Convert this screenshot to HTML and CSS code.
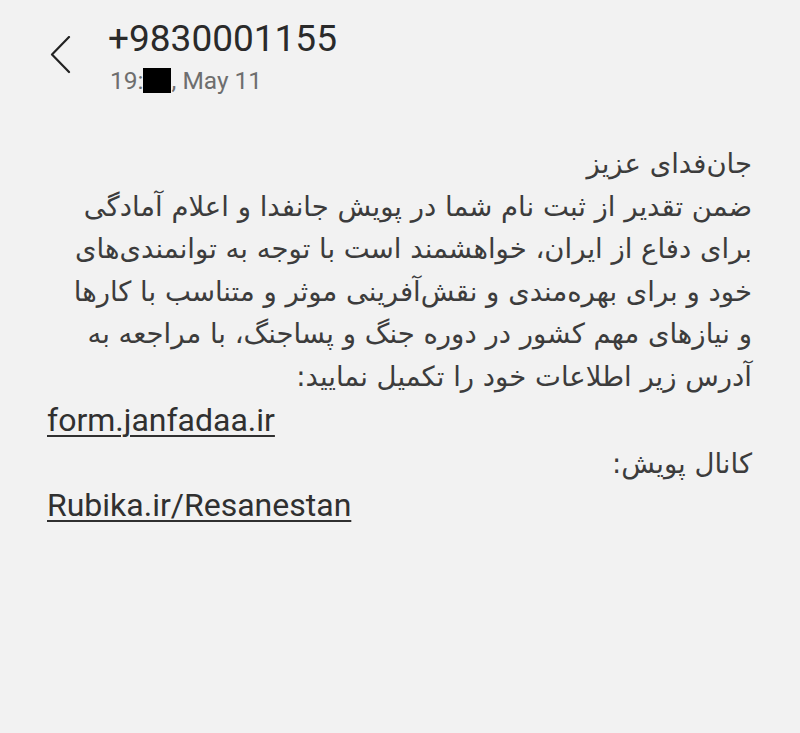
FILE: index.html
```html
<!DOCTYPE html>
<html lang="fa">
<head>
<meta charset="utf-8">
<title>+9830001155</title>
<link rel="stylesheet" href="styles.css">
</head>
<body>
<header class="topbar">
  <div class="back" aria-label="Back">
    <svg width="24" height="40" viewBox="0 0 24 40" aria-hidden="true">
      <polyline points="20,1 3,18.5 20,36" fill="none" stroke="#222" stroke-width="2.2" stroke-linecap="round" stroke-linejoin="round"/>
    </svg>
  </div>
  <div class="title-block">
    <div class="number">+9830001155</div>
    <div class="date">19:<span class="redact"></span>, May 11</div>
  </div>
</header>
<main class="message">
  <p class="fa" dir="rtl">جان&zwnj;فدای عزیز<br>ضمن تقدیر از ثبت نام شما در پویش جانفدا و اعلام آمادگی<br>برای دفاع از ایران، خواهشمند است با توجه به توانمندی&zwnj;های<br>خود و برای بهره&zwnj;مندی و نقش&zwnj;آفرینی موثر و متناسب با کارها<br>و نیازهای مهم کشور در دوره جنگ و پساجنگ، با مراجعه به<br>آدرس زیر اطلاعات خود را تکمیل نمایید:</p>
  <a class="link" href="#">form.janfadaa.ir</a>
  <p class="fa fa-short" dir="rtl">کانال پویش:</p>
  <a class="link link-last" href="#">Rubika.ir/Resanestan</a>
</main>
</body>
</html>
```

FILE: styles.css
```css
html, body {
  margin: 0;
  padding: 0;
}
body {
  background: #f2f2f2;
  width: 800px;
  height: 733px;
  overflow: hidden;
  font-family: Roboto, "DejaVu Sans", sans-serif;
}
.topbar {
  display: flex;
  align-items: flex-start;
  padding: 17px 0 0 49px;
}
.back {
  width: 24px;
  height: 40px;
  margin-top: 19px;
  margin-right: 35px;
}
.back svg {
  display: block;
}
.title-block {
  display: flex;
  flex-direction: column;
}
.number {
  font-family: Roboto, sans-serif;
  font-size: 37px;
  line-height: 44px;
  color: #2a2a2a;
}
.date {
  margin-top: 5px;
  margin-left: 2px;
  font-family: Roboto, sans-serif;
  font-size: 24.5px;
  line-height: 30px;
  color: #6e6e6e;
}
.redact {
  display: inline-block;
  width: 28px;
  height: 25px;
  background: #000;
  vertical-align: -4px;
}
.message {
  padding: 0 48px 0 47px;
}
.fa {
  margin: 46px 0 0;
  font-family: "DejaVu Sans", sans-serif;
  font-size: 27.5px;
  line-height: 42.5px;
  color: #3c3c3c;
  text-align: right;
}
.link {
  display: block;
  width: fit-content;
  margin-top: 3px;
  font-family: Roboto, sans-serif;
  font-size: 32px;
  font-weight: 400;
  line-height: 40px;
  color: #303030;
  text-decoration: underline;
  text-decoration-thickness: 1.5px;
  text-underline-offset: 4px;
}
.fa-short {
  margin-top: 5px;
  line-height: 36px;
}
.link-last {
  margin-top: 4px;
}
```
